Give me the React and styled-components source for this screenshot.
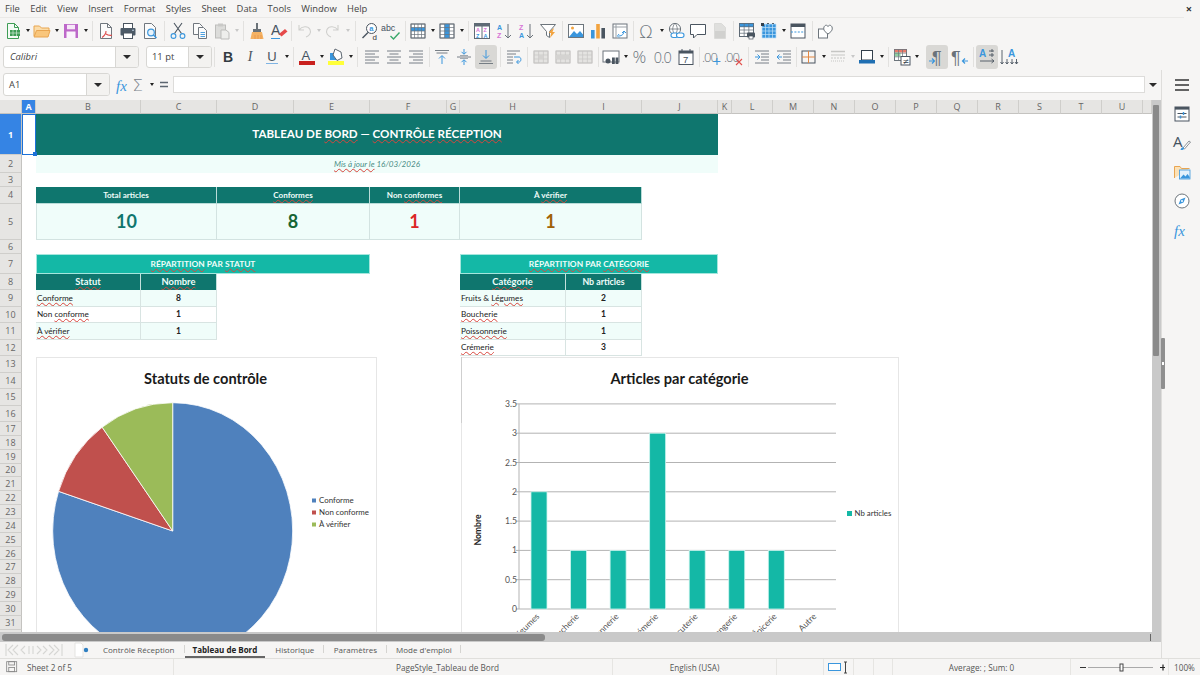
import React from "react";
import styled, { createGlobalStyle } from "styled-components";

const Global = createGlobalStyle`
  html, body { margin: 0; padding: 0; width: 1200px; height: 675px; overflow: hidden; background: #f6f5f4; }
  #root { width: 1200px; height: 675px; }
  * { box-sizing: border-box; }
`;

const UI = `"Open Sans", "Noto Sans", "Liberation Sans", sans-serif`;
const CELL = `Lato, "Liberation Sans", sans-serif`;

const Shell = styled.div`
  width: 1200px; height: 675px; display: flex; flex-direction: column;
  background: #f6f5f4; font-family: ${UI}; color: #3d3d3d; overflow: hidden;
`;
const MenuBar = styled.div`
  height: 17px; display: flex; align-items: center; gap: 10.4px; padding: 0 8px 0 5px;
  font-size: 9.4px; color: #454545; position: relative;
`;
const MenuRule = styled.div`flex: 1;`;
const CloseMark = styled.span`font-size: 11px; font-weight: 700; color: #333; line-height: 1;`;
const MenuItem = styled.span`white-space: nowrap;`;

const Toolbar = styled.div`
  height: ${p => p.$h}px; flex: none; display: flex; align-items: center; padding-left: ${p => p.$pad}px;
  border-top: ${p => (p.$ruled ? "1px solid #eae9e7" : "0")};
  margin-right: ${p => (p.$ruled ? 16 : 0)}px;
`;
const ToolBtn = styled.div`
  width: 22px; height: 24px; flex: none; display: flex; align-items: center; justify-content: center;
  border-radius: 3px; background: ${p => (p.$active ? "#d9d8d5" : "transparent")};
`;
const DropArrow = styled.div`
  width: 7px; height: 24px; flex: none; display: flex; align-items: center; justify-content: center;
  &::before {
    content: ""; border-left: 2.5px solid transparent; border-right: 2.5px solid transparent;
    border-top: 3px solid ${p => (p.$off ? "#c8c8c8" : "#222")};
  }
`;
const ToolSep = styled.div`
  width: ${p => p.$w}px; height: 20px; flex: none; display: flex; justify-content: center;
  &::before { content: ""; width: 1px; background: ${p => (p.$blank ? "transparent" : "#e2e1df")}; }
`;
const Combo = styled.div`
  width: ${p => p.$w}px; height: ${p => p.$h}px; flex: none; display: flex; margin-right: ${p => p.$mr || 0}px;
  background: #fff; border: 1px solid #d8d7d4; border-radius: 3px; overflow: hidden;
`;
const ComboText = styled.div`
  flex: 1; display: flex; align-items: center; padding-left: ${p => p.$pad}px; font-size: 9.4px; color: #444;
  font-style: ${p => (p.$italic ? "italic" : "normal")};
`;
const ComboArrow = styled.div`
  width: 23px; flex: none; display: flex; align-items: center; justify-content: center;
  background: #f3f2f0; border-left: 1px solid #d8d7d4;
  &::before {
    content: ""; border-left: 4px solid transparent; border-right: 4px solid transparent; border-top: 4px solid #2b2b2b;
  }
`;

const Workspace = styled.div`flex: 1; min-height: 0; display: flex; position: relative;`;
const MainColumn = styled.div`width: 1161px; flex: none; display: flex; flex-direction: column; min-height: 0;`;
const FormulaBar = styled.div`
  height: 30px; flex: none; display: flex; align-items: center; padding: 0 0 1px 3px;
`;
const FxGroup = styled.div`display: flex; align-items: center; margin-left: 4px;`;
const FxBtn = styled.div`
  width: ${p => p.$w}px; height: 20px; display: flex; align-items: center; justify-content: center; flex: none;
`;
const FormulaInput = styled.div`
  width: 972px; height: 17px; background: #fff; border: 1px solid #dddcda; flex: none;
`;
const FormulaDrop = styled.div`
  flex: 1; display: flex; justify-content: center;
  &::before { content: ""; border-left: 4px solid transparent; border-right: 4px solid transparent; border-top: 4px solid #2b2b2b; }
`;

const SheetRow = styled.div`flex: 1; min-height: 0; display: flex;`;
const Sheet = styled.div`
  width: 1152px; flex: none; position: relative; overflow: hidden; background: #fff;
  display: grid; align-content: start; font-family: ${CELL};
  grid-template-columns: 22px 14px 105px 76px 77px 76px 77px 13px 106px 76px 76px 14px 41px 41px 41px 41px 41px 41px 41px 42px 41px 41px 9px;
  grid-template-rows: 14px 41px 18px 14px 16.5px 36.5px 13.5px 20px 16.5px 16.5px 16.5px 16.5px 16.5px 16.5px 16.5px 16.5px 16.5px
    repeat(15, 13.85px) 13px;
`;
const ColHead = styled.div`
  grid-row: 1; grid-column: ${p => p.$c}; display: flex; align-items: center; justify-content: center;
  font-family: ${UI}; font-size: 9px;
  background: ${p => (p.$sel ? "#3584e4" : "#e6e5e3")}; color: ${p => (p.$sel ? "#fff" : "#666")};
  font-weight: ${p => (p.$sel ? 700 : 400)};
  border-right: 1px solid #cfcecb; border-bottom: 1px solid #c4c3c0;
`;
const RowHead = styled.div`
  grid-column: 1; grid-row: ${p => p.$r}; display: flex; align-items: center; justify-content: center;
  font-family: ${UI}; font-size: 9px;
  background: ${p => (p.$sel ? "#3584e4" : "#e6e5e3")}; color: ${p => (p.$sel ? "#fff" : "#666")};
  font-weight: ${p => (p.$sel ? 700 : 400)};
  border-right: 1px solid #c4c3c0; border-bottom: 1px solid #cfcecb;
`;
const Cell = styled.div`
  grid-column: ${p => p.$c}; grid-row: ${p => p.$r}; display: flex; align-items: center; justify-content: center;
  white-space: nowrap; overflow: hidden; min-width: 0;
`;
const SelectedCell = styled(Cell)`
  border: 1px solid #1c71d8; position: relative; overflow: visible; background: #fff;
  &::after { content: ""; position: absolute; right: -2px; bottom: -2px; width: 4px; height: 4px; background: #1c71d8; z-index: 2; }
`;
const TitleCell = styled(Cell)`background: #0f766e; color: #fff; font-size: 11.6px; font-weight: 700; padding-bottom: 2px;`;
const SubtitleCell = styled(Cell)`background: #f0fdfa; color: #4b8d86; font-size: 8.1px; font-style: italic;`;
const KpiHead = styled(Cell)`
  background: #0f766e; color: #f0fdfa; font-size: 8.1px; font-weight: 700;
  border-right: 1px solid #b9dcd8; border-bottom: 1px solid #b9dcd8;
`;
const KpiValue = styled(Cell)`
  background: #f0fdfa; color: ${p => p.$tone}; font-size: 18px; font-weight: 700;
  border-right: 1px solid #d3e3e1; border-bottom: 1px solid #d3e3e1; border-left: ${p => (p.$first ? "1px solid #d3e3e1" : "0")};
`;
const SectionHead = styled(Cell)`
  background: #14b8a6; color: #f0fdfa; font-size: 8.4px; font-weight: 700;
  border: 1px solid #a5e6dd;
`;
const TableHead = styled(Cell)`
  background: #0f766e; color: #f0fdfa; font-size: ${p => p.$size || 9.4}px; font-weight: 700; border-right: 1px solid #c3e0dc;
`;
const LabelCell = styled(Cell)`
  justify-content: flex-start; padding-left: 1px; font-size: 8.2px; color: #222;
  background: ${p => (p.$alt ? "#f0fdfa" : "#fff")}; border-bottom: 1px solid #d8e4e2; border-right: 1px solid #d8e4e2;
`;
const ValueCell = styled(Cell)`
  font-size: 8.5px; font-weight: 700; color: #222;
  background: ${p => (p.$alt ? "#f0fdfa" : "#fff")}; border-bottom: 1px solid #d8e4e2; border-right: 1px solid #d8e4e2;
`;
const Spell = styled.span`
  text-decoration: underline wavy #d8453c; text-decoration-thickness: 0.6px; text-underline-offset: 0.5px;
`;
const ChartBox = styled.div`
  position: absolute; left: ${p => p.$x}px; top: 257px; width: ${p => p.$w}px; height: 300px;
  background: #fff; border: 1px solid #e6e6e6; z-index: 1;
  svg { display: block; position: absolute; left: -1px; top: -1px; }
`;
const ChartTick = styled.div`
  position: absolute; left: -1px; top: -1px; width: 1px; height: 66px; background: #cfcfcf; z-index: 2;
`;

const VScroll = styled.div`flex: 1; background: #c9c9c9; position: relative; padding: 5px 2px 0 1px;`;
const VThumb = styled.div`height: 251px; background: #8a8a8a; border-radius: 1px;`;
const HScroll = styled.div`height: 10px; flex: none; background: #c9c9c9; padding: 2px 0 1px 2px; display: flex; justify-content: space-between;`;
const HThumb = styled.div`width: 543px; background: #8a8a8a; border-radius: 3px;`;
const HEnd = styled.div`width: 1px; margin: 0 10px 0 0; background: #666;`;
const TabBar = styled.div`height: 16px; flex: none; display: flex; align-items: stretch;`;
const TabNav = styled.div`width: 93px; flex: none; display: flex; align-items: center; padding-left: 5px; gap: 11px;`;
const Tab = styled.div`
  padding: 0 ${p => p.$px}px; display: flex; align-items: center; font-size: 8px; white-space: nowrap;
  color: ${p => (p.$active ? "#222" : "#555")}; font-weight: ${p => (p.$active ? 700 : 400)};
  position: relative;
  border-bottom: 2px solid ${p => (p.$active ? "#666" : "transparent")};
  &::after {
    content: ""; position: absolute; right: 0; top: 3px; bottom: 3px; width: 1px;
    background: ${p => (p.$active ? "transparent" : "#d5d4d1")};
  }
`;

const Sidebar = styled.div`
  flex: 1; border-left: 1px solid #dedddb; display: flex; flex-direction: column; align-items: center;
  padding: 6px 0 0 2px; gap: 11px;
`;
const SideHandle = styled.div`
  position: absolute; left: 1161px; top: 268px; width: 4px; height: 51px; background: #8f8f8f; border-radius: 1px;
  &::after { content: ""; position: absolute; left: 1px; top: 24px; width: 2px; height: 3px; background: #fff; }
`;
const SideIcon = styled.div`width: 18px; height: 18px; display: flex; align-items: center; justify-content: center;`;

const StatusBar = styled.div`
  height: 17px; flex: none; display: flex; align-items: center; border-top: 1px solid #e0dfdc;
  font-size: 8.2px; color: #555;
`;
const StatusCell = styled.div`
  width: ${p => p.$w}px; height: 100%; flex: none; display: flex; align-items: center;
  justify-content: ${p => p.$align || "center"}; padding-left: ${p => p.$pad || 0}px; gap: ${p => p.$gap || 0}px;
  white-space: nowrap; border-right: ${p => (p.$last ? "0" : "1px solid #e6e5e2")};
`;

/* ---------- icons ---------- */
const G = "#6a737b";
const Blue = "#3a96dd";
const lines = (ys, x1, x2, s = G) => ys.map((y, i) => {
  const a = Array.isArray(x1) ? x1[i] : x1;
  const b = Array.isArray(x2) ? x2[i] : x2;
  return <path key={i} d={`M${a} ${y}H${b}`} stroke={s} strokeWidth=".9" fill="none" />;
});
const grid = (x, y, w, h, nx, ny, s) => {
  const out = [];
  for (let i = 0; i <= nx; i++) out.push(<path key={"v" + i} d={`M${x + (w * i) / nx} ${y}v${h}`} stroke={s} strokeWidth=".7" />);
  for (let i = 0; i <= ny; i++) out.push(<path key={"h" + i} d={`M${x} ${y + (h * i) / ny}h${w}`} stroke={s} strokeWidth=".7" />);
  return out;
};
const mini = (x, y, t, c, s = 6) => <text x={x} y={y} fontSize={s} fontFamily="Liberation Sans" fontWeight="700" fill={c}>{t}</text>;
const disabledTable = (pattern) => (
  <g opacity=".95">
    <rect x="2" y="3" width="14" height="12" fill="#e4e3e1" stroke="#c4c3c1" />
    {grid(2, 3, 14, 12, 3, 3, "#c4c3c1")}
    {pattern}
  </g>
);

const ICONS = {
  new: <><path d="M3.5 1.5h7l4 4v11h-11z" fill="#f4fbf5" stroke="#3f9d55" /><path d="M10.5 1.5v4h4" fill="none" stroke="#3f9d55" /><rect x="6" y="8" width="10" height="6" fill="#3f9d55" /><path d="M9 8v6M12.5 8v6M6 11h10" stroke="#cfe9d5" strokeWidth=".7" /></>,
  open: <><path d="M1 14V4h5.5l2 2H16v3" fill="#fbdca9" stroke="#e8a551" /><path d="M1 15l2.5-6.5H17L15 15z" fill="#f9c67c" stroke="#e8a551" strokeLinejoin="round" /></>,
  save: <><rect x="2" y="2" width="14" height="14" fill="#bd68c9" /><rect x="5" y="2.8" width="8" height="4.5" fill="#f6e8f8" /><rect x="4.5" y="9.5" width="9" height="6.5" fill="#fbf3fc" /></>,
  pdf: <><path d="M3.5 1.5h7l4 4v11h-11z" fill="#fbfbfb" stroke="#70777e" /><path d="M10.5 1.5v4h4" fill="none" stroke="#70777e" /><path d="M9 9c.4 3-3 6-4 6.5M9 12c2 1.5 4 1.5 6 1.2" stroke="#dd4b4b" strokeWidth="1.1" fill="none" /></>,
  print: <><rect x="4.5" y="1.5" width="9" height="5" fill="#fff" stroke="#4a5560" /><rect x="1.5" y="6" width="15" height="7.5" rx="1" fill="#4c5a67" /><rect x="4.5" y="11" width="9" height="5.5" fill="#fff" stroke="#4a5560" /><circle cx="14" cy="8.2" r=".8" fill="#cfe3f5" /></>,
  preview: <><path d="M3.5 1.5h7l4 4v11h-11z" fill="#fbfbfb" stroke="#70777e" /><circle cx="10" cy="10.5" r="3.3" fill="#e8f3fb" stroke={Blue} strokeWidth="1.2" /><path d="M12.5 13l3 3" stroke={Blue} strokeWidth="1.5" /></>,
  cut: <><path d="M5 1l7.5 10.5M13 1L5.5 11.5" stroke="#4a5560" strokeWidth="1.1" /><circle cx="4.5" cy="14" r="2.4" fill="none" stroke={Blue} strokeWidth="1.1" /><circle cx="13.5" cy="14" r="2.4" fill="none" stroke={Blue} strokeWidth="1.1" /></>,
  copy: <><path d="M2.5 1.5h6l3 3v8h-9z" fill="#fbfbfb" stroke="#70777e" /><path d="M7.5 5.5h5l3 3v8h-8z" fill="#fbfbfb" stroke="#70777e" />{lines([10.5, 12.5, 14.5], 9.5, 14, Blue)}</>,
  paste: <><rect x="2.5" y="3" width="10" height="13" fill="#dcdcda" stroke="#bdbdbb" /><rect x="5" y="1.5" width="5" height="3" fill="#c9c9c7" /><path d="M8 8h5l3 2.5V17H8z" fill="#eeeeec" stroke="#bdbdbb" /></>,
  clone: <><rect x="8" y="1" width="2" height="6" fill="#6a7278" /><rect x="5" y="7" width="8" height="3" fill="#6a7278" /><path d="M4 10h10l1.5 7h-13z" fill="#f5b263" /><path d="M7 13v4M10 13v4M13 13v4" stroke="#e7964a" strokeWidth=".8" /></>,
  clear: <><text x="1" y="13" fontSize="14" fontFamily="Liberation Sans" fill="#44525f">A</text><path d="M1 16.5h9" stroke="#3a96dd" /><path d="M9 12l6-5 2.5 2.5-6 5z" fill="#e64a4a" /></>,
  undo: <><path d="M4 3v5h5M4 8c3-4 9-4.5 11-.5 1.6 3.5-1 6.5-4 7.5" fill="none" stroke="#cfcfcd" strokeWidth="1.1" /></>,
  redo: <><path d="M14 3v5H9M14 8c-3-4-9-4.5-11-.5-1.6 3.5 1 6.5 4 7.5" fill="none" stroke="#cfcfcd" strokeWidth="1.1" /></>,
  find: <><circle cx="10.5" cy="6.5" r="5" fill="#fff" stroke="#4a5560" /><path d="M7 10.5l-5.5 5.5" stroke="#4a5560" strokeWidth="1.5" />{mini(8.2, 9, "a", Blue, 7.5)}<text x="11.5" y="17.5" fontSize="8" fontFamily="Liberation Sans" fill="#333">d</text></>,
  spell: <><text x="-2" y="8.5" fontSize="8.8" fontFamily="Liberation Sans" fill="#44525f">abc</text><path d="M7.5 14l3 3 6-6.5" fill="none" stroke="#39a86a" strokeWidth="1.4" /></>,
  rows: <><rect x="2" y="2" width="14" height="14" fill="#fff" stroke="#6a737b" /><rect x="2" y="5.5" width="14" height="3.5" fill={Blue} />{grid(2, 2, 14, 14, 4, 4, "#6a737b")}</>,
  cols: <><rect x="2" y="2" width="14" height="14" fill="#fff" stroke="#6a737b" /><rect x="6.5" y="2" width="5" height="14" fill={Blue} />{grid(2, 2, 14, 14, 3, 4, "#6a737b")}</>,
  sort: <><rect x="1.5" y="1.5" width="15" height="15" fill="#fff" stroke="#5f6a75" /><rect x="1.5" y="1.5" width="15" height="3" fill="#5f6a75" /><path d="M9 4v12" stroke="#5f6a75" />{mini(3, 10, "A", "#d774d6", 5.5)}{mini(3, 15.5, "Z", "#3a96dd", 5.5)}{mini(10.5, 10, "Z", "#d774d6", 5.5)}{mini(10.5, 15.5, "A", "#3a96dd", 5.5)}</>,
  asc: <>{mini(2, 7.5, "A", Blue, 7)}{mini(2, 16, "Z", "#d774d6", 7)}<path d="M13 2v14M10 13l3 3 3-3" fill="none" stroke="#6a737b" /></>,
  desc: <>{mini(2, 7.5, "Z", "#d774d6", 7)}{mini(2, 16, "A", Blue, 7)}<path d="M13 2v14M10 13l3 3 3-3" fill="none" stroke="#6a737b" /></>,
  filter: <><path d="M1.5 2.5h15l-6 7v6l-3-2v-4z" fill="#fff" stroke="#6d757c" /><path d="M11 9l4-3-1.5 4H16l-5 6 1.2-5H10z" fill="#f2a33f" /></>,
  image: <><rect x="1.5" y="2.5" width="15" height="13" fill="#fff" stroke="#6d757c" /><circle cx="5.5" cy="6" r="1.5" fill="#f2a33f" /><path d="M2 15l5-6 3 3 3-3 3 3.5V15z" fill={Blue} /></>,
  chart: <><rect x="2" y="8" width="3.6" height="8.5" fill={Blue} /><rect x="7.2" y="2" width="3.6" height="14.5" fill="#f2a33f" /><rect x="12.4" y="6" width="3.6" height="10.5" fill="#4a5560" /></>,
  pivot: <><rect x="2" y="2" width="14" height="14" fill="#fff" stroke="#6d757c" /><path d="M2 5h14M5 2v14" stroke="#9ba1a7" /><path d="M8 14c3 0 5-2 5-5M11 11l2-2 2 2M8 12l-1.5 2L8 15.5" fill="none" stroke={Blue} /></>,
  omega: <text x="1" y="15.5" fontSize="18" fontFamily="DejaVu Sans" fontWeight="300" fill="#6a737b">Ω</text>,
  link: <><circle cx="8" cy="7" r="5.6" fill="#fff" stroke="#6d757c" /><path d="M2.5 7h11M8 1.4c-3 3-3 8 0 11M8 1.4c3 3 3 8 0 11" fill="none" stroke="#6d757c" strokeWidth=".8" /><rect x="4" y="11" width="7" height="4.5" rx="2.2" fill="#fff" stroke={Blue} strokeWidth="1.1" /><rect x="9.5" y="11" width="7.5" height="4.5" rx="2.2" fill="#fff" stroke={Blue} strokeWidth="1.1" /></>,
  comment: <path d="M1.5 2.5h15v10H8l-3.5 3.5v-3.5h-3z" fill="#fff" stroke="#4a5560" />,
  headerDoc: <><path d="M3.5 1.5h7l4 4v11h-11z" fill="#dfdfdd" stroke="#dadad8" /><path d="M4 9h10v7H4z" fill="#d1d1cf" /></>,
  printArea: <><rect x="1.5" y="1.5" width="14" height="13" fill="#fff" stroke="#5f6a75" /><rect x="1.5" y="1.5" width="14" height="3.5" fill={Blue} />{grid(1.5, 1.5, 14, 13, 3, 4, "#5f6a75")}<rect x="9" y="10.5" width="8" height="5" rx="1" fill="#4a5560" /><rect x="11" y="14" width="4" height="3" fill="#fff" stroke="#4a5560" strokeWidth=".7" /></>,
  freeze: <><rect x="2" y="2" width="14" height="14" fill={Blue} />{grid(2, 2, 14, 14, 4, 4, "#bfe0f7")}<rect x="1" y="1" width="3" height="3" fill="#33404c" /><path d="M8 2v-1M13 2v-1" stroke="#33404c" strokeWidth="1.6" /></>,
  split: <><rect x="2" y="2" width="14" height="14" fill="#fff" stroke="#4a5560" /><rect x="2" y="2" width="14" height="3" fill="#4a5560" /><path d="M2 10h14" stroke={Blue} strokeDasharray="2 1.4" /></>,
  shapes: <><rect x="1.5" y="7" width="9" height="9" fill="#fff" stroke="#6d757c" /><path d="M11 12c-3-2-5-4-4-7 1-2.5 3.5-2 4-.5.5-1.5 3-2 4 .5 1 3-1 5-4 7z" fill="#fff" stroke="#6d757c" /></>,
  alignL: <>{lines([3, 6, 9, 12, 15], 2, [16, 12, 16, 12, 16])}</>,
  alignC: <>{lines([3, 6, 9, 12, 15], [2, 4.5, 2, 4.5, 2], [16, 13.5, 16, 13.5, 16])}</>,
  alignR: <>{lines([3, 6, 9, 12, 15], [2, 6, 2, 6, 2], 16)}</>,
  top: <>{lines([2.5, 5], [2, 3.5], [16, 14.5])}<path d="M9 16V8M6 10.5L9 7.5l3 3" fill="none" stroke={Blue} /></>,
  middle: <>{lines([9], 2, 16)}{lines([7.5, 10.5], 5, 13, "#9aa1a8")}<path d="M9 1v5M6.5 3.8L9 6.3l2.5-2.5M9 17v-5M6.5 14.2L9 11.7l2.5 2.5" fill="none" stroke={Blue} /></>,
  bottom: <>{lines([13, 15.5], [3.5, 2], [14.5, 16])}<path d="M9 2v8M6 7.5l3 3 3-3" fill="none" stroke={Blue} /></>,
  wrap: <>{lines([3, 6, 9, 12, 15], 2, [15, 11, 8, 8, 8])}<path d="M9 9h5c2.5 0 2.5 5 0 5h-2M13.5 12l-2 2 2 2" fill="none" stroke={Blue} /></>,
  merge: disabledTable(<rect x="6.7" y="7" width="4.6" height="4" fill="#d3d2d0" />),
  mergeB: disabledTable(<rect x="2" y="7" width="14" height="4" fill="#d3d2d0" />),
  mergeC: disabledTable(null),
  currency: <><rect x="1" y="3" width="16" height="11" fill="#fff" stroke="#6d757c" /><circle cx="6" cy="13" r="2.5" fill="#4a5560" /><rect x="10" y="9.5" width="2.8" height="6.5" fill="#4a5560" /><rect x="13.6" y="9.5" width="2.8" height="6.5" fill="#4a5560" /></>,
  percent: <text x="-0.5" y="15" fontSize="17" fontFamily="Open Sans" fontWeight="300" fill="#6a737b">%</text>,
  decimal: <text x="-1.2" y="14.5" fontSize="14.5" letterSpacing="-1" fontFamily="Open Sans" fontWeight="300" fill="#6a737b">0.0</text>,
  calendar: <><rect x="2" y="3" width="14" height="13.5" fill="#fff" stroke="#4a5560" /><rect x="2" y="3" width="14" height="2.5" fill="#4a5560" /><path d="M5 1v3M13 1v3" stroke="#4a5560" /><text x="6" y="14.5" fontSize="9.5" fontFamily="Liberation Sans" fill="#4a5560">7</text></>,
  addDec: <><text x="-1" y="13.5" fontSize="13" letterSpacing="-1" fontFamily="Open Sans" fontWeight="300" fill="#6a737b">.00</text><path d="M14 10v7M10.5 13.5h7" stroke={Blue} strokeWidth="1.1" /></>,
  remDec: <><text x="-1" y="13.5" fontSize="13" letterSpacing="-1" fontFamily="Open Sans" fontWeight="300" fill="#6a737b">.00</text><path d="M11 11l6 6M17 11l-6 6" stroke="#e2504c" strokeWidth="1.1" /></>,
  indent: <>{lines([3, 15], 2, 16)}{lines([6, 9, 12], 8, 16)}<path d="M2 9h4M4.5 6.5L7 9l-2.5 2.5" fill="none" stroke={Blue} /></>,
  outdent: <>{lines([3, 15], 2, 16)}{lines([6, 9, 12], 8, 16)}<path d="M7 9H2M4.5 6.5L2 9l2.5 2.5" fill="none" stroke={Blue} /></>,
  borders: <><rect x="2" y="3" width="13" height="12" fill="none" stroke="#4a5560" /><path d="M8.5 3v12M2 9h13" stroke="#e28743" /></>,
  borderStyle: <><path d="M2 3.5h14" stroke="#c6c6c4" strokeWidth="1.5" /><path d="M2 7h14" stroke="#c6c6c4" /><path d="M2 10h14" stroke="#c6c6c4" strokeDasharray="2 1" /><path d="M2 13h14" stroke="#c6c6c4" strokeDasharray="1 1" /></>,
  borderColor: <><rect x="3.5" y="2.5" width="11" height="9.5" fill="#fff" stroke="#33404c" /><rect x="1" y="12" width="16" height="3.5" fill="#1f6fb2" /></>,
  cond: <><rect x="1.5" y="1.5" width="12" height="11" fill="#fff" stroke="#6d757c" /><rect x="1.5" y="1.5" width="12" height="3" fill="#e77a6b" /><rect x="1.5" y="4.5" width="6" height="4" fill="#8fd0a0" />{grid(1.5, 1.5, 12, 11, 3, 3, "#6d757c")}<rect x="8" y="8.5" width="9" height="8.5" fill="#fff" stroke="#4a5560" /><text x="9.5" y="15.5" fontSize="8" fontFamily="DejaVu Sans" fill="#33404c">≠</text></>,
  ltr: <><text x="4" y="15.5" fontSize="18" fontFamily="Liberation Sans" fill="#6a737b">¶</text><path d="M1 13h5M4 10.5L6.5 13 4 15.5" fill="none" stroke={Blue} strokeWidth="1.2" /></>,
  rtl: <><text x="0" y="15.5" fontSize="18" fontFamily="Liberation Sans" fill="#6a737b">¶</text><path d="M17 13h-5M14 10.5L11.5 13l2.5 2.5" fill="none" stroke={Blue} strokeWidth="1.2" /></>,
  horiz: <>{mini(1, 9, "A", Blue, 10)}<path d="M2 13h14M13.5 11l2.5 2-2.5 2M11 3h5M14 1v3M11 7h5M14 5v4" fill="none" stroke="#4a5560" strokeWidth=".9" /></>,
  vert: <>{mini(8, 9, "A", Blue, 10)}<path d="M2 2v14M0.5 14l1.5 2 1.5-2M7 11v5M5.5 14l1.5 2 1.5-2M12 11v5M10.5 14l1.5 2 1.5-2M16.5 11v5M15 14l1.5 2 1.5-2" fill="none" stroke="#4a5560" strokeWidth=".9" /></>,
  menu: <path d="M2 4h14M2 9h14M2 14h14" stroke="#333" strokeWidth="1.4" />,
  props: <><rect x="2" y="2" width="14" height="14" fill="#fff" stroke="#4a5560" /><rect x="2" y="2" width="14" height="2.6" fill="#4a5560" /><path d="M4.5 8.5h9M4.5 12h9" stroke="#4a5560" /><path d="M10.5 7v3M7.5 10.5v3" stroke={Blue} strokeWidth="1.4" /></>,
  styles: <><text x="0" y="12.5" fontSize="15" fontFamily="Open Sans" fill="#44525f">A</text><path d="M10 14l6-7 1.5 1-6 7z" fill="#fff" stroke="#6d757c" strokeWidth=".8" /><path d="M7.5 16c.5-2 2-3 3-2.5 1 1 .5 3-3 2.5z" fill={Blue} /></>,
  gallery: <><path d="M1.5 15V3.5h5.5l1.5 2h8" fill="#fce1b6" stroke="#e8a551" /><rect x="6.5" y="7" width="10.5" height="9" fill="#e4f1fb" stroke={Blue} strokeWidth=".8" /><path d="M7 15.5l3.5-4 2 2 2-2.5 2.2 3v1.5z" fill={Blue} /></>,
  compass: <><circle cx="9" cy="9" r="7" fill="#fff" stroke="#6d757c" /><path d="M12.5 5.5L10.5 10.5 5.5 12.5 7.5 7.5z" fill={Blue} /><circle cx="9" cy="9" r="1" fill="#fff" /></>,
  fx: <text x="1" y="14.5" fontSize="15" fontStyle="italic" fontFamily="Liberation Serif" fill={Blue}>fx</text>,
  sigma: <text x="0.5" y="15" fontSize="16.5" fontFamily="DejaVu Sans" fontWeight="200" fill="#7a828a">Σ</text>,
  equals: <path d="M5 6.5h8M5 10.5h8" stroke="#5c6670" strokeWidth="1.5" />,
  sheetSave: <><rect x="2" y="2" width="12" height="12" fill="none" stroke="#888" /><rect x="4.5" y="2" width="7" height="4" fill="none" stroke="#888" /><rect x="4.5" y="9" width="7" height="5" fill="none" stroke="#888" /></>,
};

const Icon = ({ name, size = 18 }) => (
  <svg width={size} height={size} viewBox="0 0 18 18" style={{ overflow: "visible" }}>{ICONS[name]}</svg>
);

const Glyph = styled.span`
  font-family: ${p => p.$font || `"Liberation Sans", sans-serif`}; font-size: ${p => p.$size || 14}px;
  font-weight: ${p => p.$weight || 400}; font-style: ${p => p.$italic ? "italic" : "normal"}; color: ${p => p.$color || "#4a5560"};
  line-height: 1; position: relative;
  ${p => p.$rule ? `border-bottom: 1.5px solid ${p.$rule}; padding: 0 1px;` : ""}
`;

const ColorBtn = ({ children, bar }) => (
  <svg width="18" height="18" viewBox="0 0 18 18" style={{ overflow: "visible" }}>
    {children}
    <rect x="1" y="13" width="16" height="4" fill={bar} />
  </svg>
);

const renderToken = (tok, i) => {
  if (tok[0] === "|") return <ToolSep key={i} $w={+tok.slice(1)} />;
  if (tok[0] === "_") return <ToolSep key={i} $w={+tok.slice(1)} $blank />;
  if (tok === "v") return <DropArrow key={i} />;
  if (tok === "v-") return <DropArrow key={i} $off />;
  if (tok === "B") return <ToolBtn key={i}><Glyph $size={14} $weight={700} $color="#333b42">B</Glyph></ToolBtn>;
  if (tok === "I") return <ToolBtn key={i}><Glyph $size={14} $italic $font={`"Liberation Serif", serif`}>I</Glyph></ToolBtn>;
  if (tok === "U") return <ToolBtn key={i}><Glyph $size={13} $rule="#7fb4e3">U</Glyph></ToolBtn>;
  if (tok === "fontColor") return <ToolBtn key={i}><ColorBtn bar="#c9211e"><text x="3.5" y="12" fontSize="13" fontFamily="Liberation Sans" fill="#44525f">A</text></ColorBtn></ToolBtn>;
  if (tok === "bgColor") return <ToolBtn key={i}><ColorBtn bar="#ffff38"><path d="M3 5h7v7H3z" fill="#3a96dd" /><path d="M8 1l6 3 1 6-5 2.5L6 7z" fill="#fff" stroke="#5c6670" /></ColorBtn></ToolBtn>;
  const active = tok.endsWith("*");
  return <ToolBtn key={i} $active={active}><Icon name={active ? tok.slice(0, -1) : tok} /></ToolBtn>;
};

const Tools = ({ tokens }) => tokens.split(/\s+/).filter(Boolean).map(renderToken);

const ROW_ONE = `new v open v save v |6 pdf print preview |6 cut copy paste v- |6 clone clear |3 undo v- redo v- |8 find spell |4
 rows v cols v |6 sort asc desc filter |6 image chart pivot |5 omega v link comment headerDoc |5 printArea freeze v split |6 shapes`;
const ROW_TWO = `|5 B I U v |6 fontColor v bgColor v |7 alignL alignC alignR |4 top middle bottom* |6 wrap |5 merge mergeB mergeC |4
 currency v _2 percent decimal calendar |4 addDec remDec |6 indent outdent |3 borders v borderStyle v- borderColor v |6 cond v _6 ltr* _1 rtl |5 horiz* vert`;

/* ---------- sheet data ---------- */
const COLS = ["A", "B", "C", "D", "E", "F", "G", "H", "I", "J", "K", "L", "M", "N", "O", "P", "Q", "R", "S", "T", "U"];
const s = (t) => <Spell>{t}</Spell>;

const STATUS = [
  [s("Conforme"), "8"],
  [<>Non&nbsp;{s("conforme")}</>, "1"],
  [s("À vérifier"), "1"],
];
const CATS = [
  [<>Fruits&nbsp;&amp;&nbsp;{s("Légumes")}</>, "2"],
  [s("Boucherie"), "1"],
  [s("Poissonnerie"), "1"],
  [s("Crémerie"), "3"],
];

const pieCx = 172.7, pieCy = 531, pieRx = 120, pieRy = 128.3;
const pt = (deg) => {
  const a = (deg * Math.PI) / 180;
  return `${(pieCx + pieRx * Math.sin(a)).toFixed(2)} ${(pieCy - pieRy * Math.cos(a)).toFixed(2)}`;
};
const slice = (a, b) => `M${pieCx} ${pieCy}L${pt(a)}A${pieRx} ${pieRy} 0 ${b - a > 180 ? 1 : 0} 1 ${pt(b)}Z`;

const PieChart = () => (
  <svg width="341" height="300" viewBox="36 357 341 300">
    <text x="205.5" y="384" textAnchor="middle" fontFamily="Lato" fontWeight="700" fontSize="14.6" fill="#1a1a1a">Statuts de contrôle</text>
    <path d={slice(0, 288)} fill="#4f81bd" stroke="#fff" strokeWidth=".8" />
    <path d={slice(288, 324)} fill="#c0504d" stroke="#fff" strokeWidth=".8" />
    <path d={slice(324, 360)} fill="#9bbb59" stroke="#fff" strokeWidth=".8" />
    {[["Conforme", "#4f81bd", 504], ["Non conforme", "#c0504d", 516], ["À vérifier", "#9bbb59", 528]].map(([t, c, y]) => (
      <g key={t}>
        <rect x="312" y={y - 5.5} width="4" height="4" fill={c} />
        <text x="319" y={y - 1} fontFamily="Lato" fontSize="7.9" fill="#333">{t}</text>
      </g>
    ))}
  </svg>
);

const BAR_DATA = [["Fruits & Légumes", 2], ["Boucherie", 1], ["Poissonnerie", 1], ["Crémerie", 3], ["Charcuterie", 1], ["Boulangerie", 1], ["Épicerie", 1], ["Autre", 0]];
const Y0 = 609, YS = 58.6;
const BarChart = () => (
  <svg width="438" height="300" viewBox="461 357 438 300">
    <text x="679.5" y="384" textAnchor="middle" fontFamily="Lato" fontWeight="700" fontSize="14.6" fill="#1a1a1a">Articles par catégorie</text>
    {[0, 0.5, 1, 1.5, 2, 2.5, 3, 3.5].map((v) => (
      <g key={v}>
        <path d={`M516 ${Y0 - v * YS}H836`} stroke="#b3b3b3" strokeWidth="1" />
        <text x="517" y={Y0 - v * YS + 3} textAnchor="end" fontFamily="Lato" fontSize="8.6" fill="#555">{v}</text>
      </g>
    ))}
    <path d={`M519 ${Y0 - 3.5 * YS}V${Y0}`} stroke="#b3b3b3" />
    {BAR_DATA.map(([label, v], i) => {
      const cx = 539 + i * 39.55;
      return (
        <g key={label}>
          {v > 0 && <rect x={cx - 8} y={Y0 - v * YS} width="16" height={v * YS} fill="#14b8a6" stroke="#ccf5ef" strokeWidth=".8" />}
          <text x={cx + 1} y="617" textAnchor="end" transform={`rotate(-45 ${cx + 1} 617)`} fontFamily="Lato" fontSize="8.6" fill="#555">{label}</text>
        </g>
      );
    })}
    <text x="481" y="530" textAnchor="middle" transform="rotate(-90 481 530)" fontFamily="Lato" fontWeight="700" fontSize="8.6" fill="#222">Nombre</text>
    <rect x="847" y="511" width="5" height="5" fill="#14b8a6" />
    <text x="854.5" y="516" fontFamily="Lato" fontSize="7.8" fill="#333">Nb articles</text>
  </svg>
);

const MENU = ["File", "Edit", "View", "Insert", "Format", "Styles", "Sheet", "Data", "Tools", "Window", "Help"];
const TABS = [["Contrôle Réception", false, 10], ["Tableau de Bord", true, 8], ["Historique", false, 10], ["Paramètres", false, 9.5], ["Mode d'emploi", false, 9.5]];

export default function App() {
  return (
    <Shell>
      <Global />
      <MenuBar>
        {MENU.map((m) => <MenuItem key={m}>{m}</MenuItem>)}
        <MenuRule />
        <CloseMark>×</CloseMark>
      </MenuBar>
      <Toolbar $h={26} $pad={2} $ruled><Tools tokens={ROW_ONE} /></Toolbar>
      <Toolbar $h={27} $pad={3}>
        <Combo $w={136} $h={22} $mr={7}><ComboText $pad={6} $italic>Calibri</ComboText><ComboArrow /></Combo>
        <Combo $w={66} $h={22}><ComboText $pad={5}>11 pt</ComboText><ComboArrow /></Combo>
        <Tools tokens={ROW_TWO} />
      </Toolbar>
      <Workspace>
        <MainColumn>
          <FormulaBar>
            <Combo $w={107} $h={23}><ComboText $pad={5}>A1</ComboText><ComboArrow /></Combo>
            <FxGroup>
              <FxBtn $w={20}><Icon name="fx" /></FxBtn>
              <FxBtn $w={14}><Icon name="sigma" /></FxBtn>
              <DropArrow />
              <FxBtn $w={18}><Icon name="equals" /></FxBtn>
            </FxGroup>
            <FormulaInput />
            <FormulaDrop />
          </FormulaBar>
          <SheetRow>
            <Sheet>
              <ColHead $c={1} />
              {COLS.map((c, i) => <ColHead key={c} $c={i + 2} $sel={c === "A"}>{c}</ColHead>)}
              <ColHead $c={23} />
              {Array.from({ length: 32 }, (_, i) => (
                <RowHead key={i} $r={i + 2} $sel={i === 0}>{i < 31 ? i + 1 : ""}</RowHead>
              ))}
              <SelectedCell $c={2} $r={2} />
              <TitleCell $c="3 / 12" $r={2}>TABLEAU DE&nbsp;{s("BORD")}&nbsp;—&nbsp;{s("CONTRÔLE")}&nbsp;{s("RÉCEPTION")}</TitleCell>
              <SubtitleCell $c="3 / 12" $r={3}>{s("Mis à jour le")}&nbsp;16/03/2026</SubtitleCell>

              <KpiHead $c="3 / 5" $r={5}>Total articles</KpiHead>
              <KpiHead $c="5 / 7" $r={5}>{s("Conformes")}</KpiHead>
              <KpiHead $c="7 / 9" $r={5}>Non&nbsp;{s("conformes")}</KpiHead>
              <KpiHead $c="9 / 11" $r={5}>À&nbsp;{s("vérifier")}</KpiHead>
              <KpiValue $c="3 / 5" $r={6} $tone="#0f766e" $first>10</KpiValue>
              <KpiValue $c="5 / 7" $r={6} $tone="#166534">8</KpiValue>
              <KpiValue $c="7 / 9" $r={6} $tone="#dc2626">1</KpiValue>
              <KpiValue $c="9 / 11" $r={6} $tone="#a16207">1</KpiValue>

              <SectionHead $c="3 / 7" $r={8}>{s("RÉPARTITION")}&nbsp;PAR&nbsp;{s("STATUT")}</SectionHead>
              <TableHead $c={3} $r={9}>{s("Statut")}</TableHead>
              <TableHead $c={4} $r={9}>{s("Nombre")}</TableHead>
              {STATUS.map(([label, v], i) => (
                <React.Fragment key={i}>
                  <LabelCell $c={3} $r={10 + i} $alt={i % 2 === 0}>{label}</LabelCell>
                  <ValueCell $c={4} $r={10 + i} $alt={i % 2 === 0}>{v}</ValueCell>
                </React.Fragment>
              ))}

              <SectionHead $c="9 / 12" $r={8}>{s("RÉPARTITION")}&nbsp;PAR&nbsp;{s("CATÉGORIE")}</SectionHead>
              <TableHead $c={9} $r={9}>{s("Catégorie")}</TableHead>
              <TableHead $c={10} $r={9} $size={8.8}>Nb articles</TableHead>
              {CATS.map(([label, v], i) => (
                <React.Fragment key={i}>
                  <LabelCell $c={9} $r={10 + i} $alt={i % 2 === 0}>{label}</LabelCell>
                  <ValueCell $c={10} $r={10 + i} $alt={i % 2 === 0}>{v}</ValueCell>
                </React.Fragment>
              ))}

              <ChartBox $x={36} $w={341}><PieChart /></ChartBox>
              <ChartBox $x={461} $w={438}><BarChart /><ChartTick /></ChartBox>
            </Sheet>
            <VScroll><VThumb /></VScroll>
          </SheetRow>
          <HScroll><HThumb /><HEnd /></HScroll>
          <TabBar>
            <TabNav>
              <svg width="58" height="14" viewBox="0 0 58 14">
                <path d="M1 1v12M8 2L3 7l5 5M13 2L8 7l5 5M20 3l-4 4 4 4M24 3v8M28 3v8M32 3l4 4-4 4M38 3l4 4-4 4M44 2l5 5-5 5M49 2l5 5-5 5M57 1v12" fill="none" stroke="#d6d6d4" strokeWidth="1.1" />
              </svg>
              <svg width="16" height="14" viewBox="0 0 16 14" style={{ overflow: "visible" }}>
                <path d="M1 0h6l2 2v12H1z" fill="#fff" stroke="#e4e3e1" />
                <circle cx="12" cy="7" r="2.2" fill="#2f7fc1" />
              </svg>
            </TabNav>
            {TABS.map(([t, a, px]) => <Tab key={t} $active={a} $px={px}>{t}</Tab>)}
          </TabBar>
        </MainColumn>
        <Sidebar>
          {["menu", "props", "styles", "gallery", "compass", "fx"].map((n) => <SideIcon key={n}><Icon name={n} /></SideIcon>)}
        </Sidebar>
        <SideHandle />
      </Workspace>
      <StatusBar>
        <StatusCell $w={174} $align="flex-start" $pad={5} $gap={7}><Icon name="sheetSave" size={15} />Sheet 2 of 5</StatusCell>
        <StatusCell $w={439} $align="flex-start" $pad={222}>PageStyle_Tableau de Bord</StatusCell>
        <StatusCell $w={164}>English (USA)</StatusCell>
        <StatusCell $w={47} />
        <StatusCell $w={30}>
          <svg width="22" height="13" viewBox="0 0 22 13"><rect x=".5" y="2.5" width="12" height="7" fill="#fff" stroke="#3a96dd" /><path d="M16 1h3M17.5 1v11M16 12h3" stroke="#444" fill="none" /></svg>
        </StatusCell>
        <StatusCell $w={20} />
        <StatusCell $w={19} />
        <StatusCell $w={178}>Average: ; Sum: 0</StatusCell>
        <StatusCell $w={98}>
          <svg width="90" height="13" viewBox="0 0 90 13"><path d="M5 6.5h6" stroke="#333" /><path d="M13 6.5h65" stroke="#aaa" /><rect x="45" y="3" width="3" height="7" fill="#fff" stroke="#444" /><path d="M85 6.5h6M88 3.5v6" stroke="#222" strokeWidth="1.2" /></svg>
        </StatusCell>
        <StatusCell $w={31} $last>100%</StatusCell>
      </StatusBar>
    </Shell>
  );
}
